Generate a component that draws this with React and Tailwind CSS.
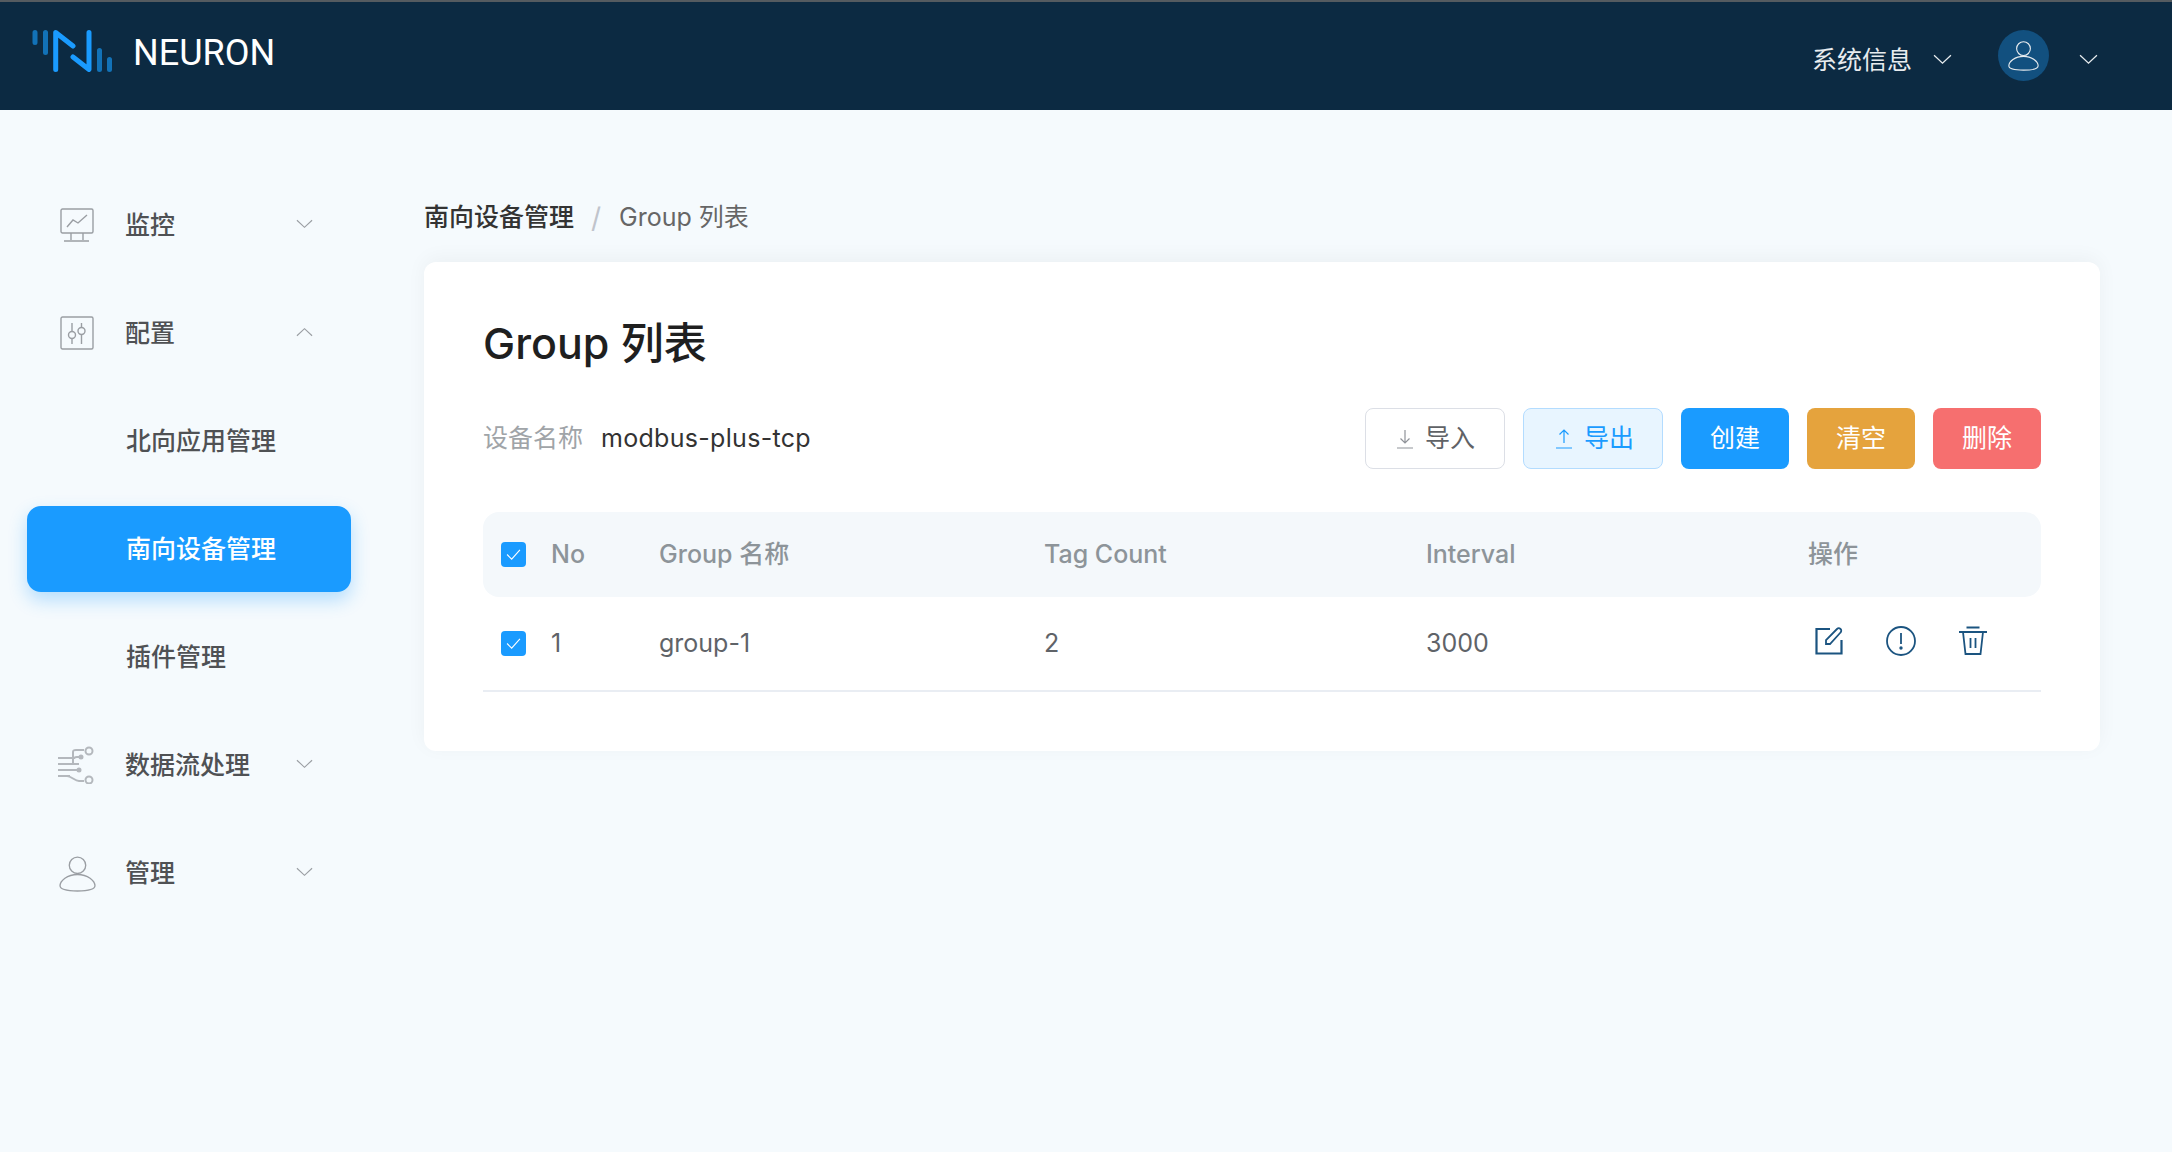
import React from 'react';

const Chevron = ({ up, className }) => (
  <svg viewBox="0 0 18 10" fill="none" stroke="currentColor" strokeWidth="1.2" className={className}>
    <polyline points={up ? '1,9 9,1.5 17,9' : '1,1 9,8.5 17,1'} />
  </svg>
);

const Logo = () => (
  <svg viewBox="0 0 84 44" className="w-[84px] h-[44px] -mt-[6px]" fill="none" strokeLinecap="round" strokeLinejoin="round" strokeWidth="5">
    <path d="M5 4.500V14.500M15.500 4.500V24.500M79.500 31.500V41.500M69.500 22.500V41.500" stroke="#1272b8" />
    <path d="M25.700 41.500V4.500L43 18M43 29L59 41.500V4.500" stroke="#1a9bff" />
  </svg>
);

const UserIcon = ({ className }) => (
  <svg viewBox="0 0 36 36" fill="none" stroke="currentColor" strokeWidth="1.3" className={className}>
    <circle cx="18" cy="10" r="8" />
    <path d="M18 19C8 19 1 25 1 30C1 34 8 35 18 35C28 35 35 34 35 30C35 25 28 19 18 19Z" />
  </svg>
);

const MonitorIcon = () => (
  <svg viewBox="0 0 34 34" fill="none" stroke="#9a9ea3" strokeWidth="1.4" className="w-[34px] h-[34px]">
    <rect x="1" y="1" width="32" height="24" rx="1.500" />
    <polyline points="7,19 13,12 18,15 27,7" />
    <path d="M11 25V32M23 25V32M4 33H29" />
  </svg>
);

const SlidersIcon = () => (
  <svg viewBox="0 0 34 34" fill="none" stroke="#9a9ea3" strokeWidth="1.4" className="w-[34px] h-[34px]">
    <rect x="1" y="1" width="32" height="32" rx="1.500" />
    <path d="M12 7V15.500M12 22V28M21.500 7V11.500M21.500 18V28" />
    <circle cx="12" cy="19" r="3.500" />
    <circle cx="21.500" cy="15" r="3.500" />
  </svg>
);

const FlowIcon = () => (
  <svg viewBox="0 0 38 38" fill="none" stroke="#b4b8bd" strokeWidth="2" className="w-[38px] h-[38px]">
    <path d="M1 12H16M1 18H22M1 24H20M1 30H13" />
    <path d="M16 18V6C16 4 17 4 19 4H27M14 12H16M22 11H20C18 11 17 12 17 13M13 24L19 24M10 30C14 30 18 35 22 35H27" />
    <circle cx="32" cy="5" r="3.500" />
    <circle cx="32" cy="34" r="3.500" />
    <circle cx="24" cy="11" r="1.500" fill="#b4b8bd" />
    <circle cx="22" cy="24" r="1.500" fill="#b4b8bd" />
  </svg>
);

const MenuRow = ({ icon, label, up, iconClass = 'pl-[33px]' }) => (
  <div className="flex items-center h-[86px] mb-[22px] w-[324px] text-[#4f5154] font-medium">
    <div className={`w-[98px] flex items-center ${iconClass}`}>{icon}</div>
    <span className="flex-1 text-[25px] pt-[2px]">{label}</span>
    <Chevron up={up} className="w-[17px] h-[10px] mr-[38px] -mt-[2px] text-[#9a9ea3]" />
  </div>
);

const SubRow = ({ label, active }) => (
  <div
    className={`flex items-center h-[86px] mb-[22px] w-[324px] pl-[99px] pt-[2px] rounded-[14px] text-[25px] font-medium ${
      active ? 'bg-[#1a9bff] text-white shadow-[0_8px_18px_rgba(26,155,255,0.3)]' : 'text-[#4f5154]'
    }`}
  >
    {label}
  </div>
);

const Checkbox = () => (
  <div className="w-[25px] h-[25px] rounded-[4px] bg-[#1a9bff] flex items-center justify-center">
    <svg viewBox="0 0 16 12" fill="none" stroke="white" strokeWidth="1.200" className="w-[15px] h-[11px]">
      <polyline points="1,6 6,11 15,1" />
    </svg>
  </div>
);

const Arrow = ({ down, color }) => (
  <svg viewBox="0 0 18 20" fill="none" stroke={color} strokeWidth="1.200" className="w-[18px] h-[20px]">
    {down ? <path d="M9 1V14M4.500 9.500L9 14L13.500 9.500M1 19H17" /> : <path d="M9 14V1M4.500 5.500L9 1L13.500 5.500M1 19H17" />}
  </svg>
);

const EditIcon = () => (
  <svg viewBox="0 0 28 28" fill="none" stroke="#1b5480" strokeWidth="2.200" className="w-[28px] h-[28px]">
    <path d="M15 2H1.500V26.500H26.500V13" />
    <path d="M11 17V13L22 2C23 1 24.500 1 25.500 2C26.500 3 26.500 4.500 25.500 5.500L15 17H11Z" strokeWidth="1.800" />
  </svg>
);

const InfoIcon = () => (
  <svg viewBox="0 0 30 30" fill="none" stroke="#1b5480" strokeWidth="1.800" className="w-[30px] h-[30px]">
    <circle cx="15" cy="15" r="14" />
    <path d="M15 7V18" />
    <circle cx="15" cy="22" r="0.800" fill="#1b5480" />
  </svg>
);

const TrashIcon = () => (
  <svg viewBox="0 0 28 30" fill="none" stroke="#1b5480" strokeWidth="1.800" className="w-[28px] h-[30px]">
    <path d="M0 6H28M7.500 1.500H20.500M4 6L6.500 28H21.500L24 6M11.500 12V22M16.500 12V22" />
  </svg>
);

const Row = ({ children, className }) => (
  <div className={`grid grid-cols-[68px_108px_385px_382px_382px_1fr] items-center ${className}`}>{children}</div>
);

export default function App() {
  return (
    <div className="min-h-[1152px] bg-[#f5fafd] font-['Inter','Noto_Sans_CJK_SC',sans-serif]">
      {/* Header */}
      <header className="h-[110px] bg-[#0c2a42] border-t-2 border-[#555b60] flex items-center justify-between pl-[30px] pr-[74px]">
        <div className="flex items-center gap-[19px] -mt-[6px]">
          <Logo />
          <span className="text-[36px] text-white font-['Roboto',sans-serif]">NEURON</span>
        </div>
        <div className="flex items-center text-[#e8ecef]">
          <span className="text-[25px] mt-[10px]">系统信息</span>
          <Chevron className="w-[19px] h-[11px] ml-[21px] mt-[6px]" />
          <div className="ml-[46px] w-[51px] h-[51px] rounded-full bg-[#12507f] flex items-center justify-center text-[#e8ecef] -mt-[1px]">
            <UserIcon className="w-[31px] h-[31px]" />
          </div>
          <Chevron className="w-[19px] h-[11px] ml-[30px] mt-[6px]" />
        </div>
      </header>

      <div className="flex">
        {/* Sidebar */}
        <aside className="w-[424px] shrink-0 pt-[72px] pl-[27px]">
          <MenuRow icon={<MonitorIcon />} label="监控" />
          <MenuRow icon={<SlidersIcon />} label="配置" up />
          <SubRow label="北向应用管理" />
          <SubRow label="南向设备管理" active />
          <SubRow label="插件管理" />
          <MenuRow icon={<FlowIcon />} label="数据流处理" iconClass="pl-[30px]" />
          <MenuRow icon={<UserIcon className="w-[37px] h-[37px] text-[#9a9ea3]" />} label="管理" iconClass="pl-[32px]" />
        </aside>

        {/* Main */}
        <main className="flex-1 pt-[90px] pr-[72px]">
          <div className="flex items-center h-[36px] mb-[26px] text-[25px]">
            <span className="font-medium text-[#333]">南向设备管理</span>
            <span className="ml-[17px] mr-[18px] text-[28px] text-[#c0c4cc]">/</span>
            <span className="text-[#666]">Group 列表</span>
          </div>

          <div className="bg-white rounded-[12px] shadow-[0_-4px_20px_rgba(0,0,0,0.045)] px-[59px] pt-[53px] pb-[59px]">
            <h1 className="text-[43px] leading-[56px] font-medium text-[#1f1f1f] mb-[37px]">Group 列表</h1>

            <div className="flex items-center justify-between mb-[43px]">
              <div className="text-[25px]">
                <span className="text-[#a0a4a8] mr-[18px]">设备名称</span>
                <span className="text-[#333] tracking-[0.3px]">modbus-plus-tcp</span>
              </div>
              <div className="flex items-center gap-[18px] text-[25px]">
                <button className="h-[61px] w-[140px] pl-[1px] rounded-[8px] border border-[#dcdfe6] bg-white text-[#606266] flex items-center justify-center gap-[11px]">
                  <Arrow down color="#909399" />
                  导入
                </button>
                <button className="h-[61px] w-[140px] pl-[3px] rounded-[8px] border border-[#b3dcff] bg-[#e8f5ff] text-[#1a9bff] flex items-center justify-center gap-[11px]">
                  <Arrow color="#1a9bff" />
                  导出
                </button>
                <button className="h-[61px] w-[108px] rounded-[8px] bg-[#1a9bff] text-white">创建</button>
                <button className="h-[61px] w-[108px] rounded-[8px] bg-[#e5a33d] text-white">清空</button>
                <button className="h-[61px] w-[108px] rounded-[8px] bg-[#f66f6f] text-white">删除</button>
              </div>
            </div>

            <Row className="h-[85px] rounded-[16px] bg-[#f4f8fb] text-[25px] text-[#8d9499] font-medium">
              <div className="pl-[18px]">
                <Checkbox />
              </div>
              <span>No</span>
              <span>Group 名称</span>
              <span>Tag Count</span>
              <span>Interval</span>
              <span>操作</span>
            </Row>
            <Row className="h-[95px] border-b-2 border-[#e9edf3] text-[25px] text-[#5f6368]">
              <div className="pl-[18px]">
                <Checkbox />
              </div>
              <span>1</span>
              <span>group-1</span>
              <span>2</span>
              <span>3000</span>
              <div className="flex items-center gap-[43px] pl-[7px] -mt-[5px] text-[#1b5480]">
                <EditIcon />
                <InfoIcon />
                <TrashIcon />
              </div>
            </Row>
          </div>
        </main>
      </div>
    </div>
  );
}
